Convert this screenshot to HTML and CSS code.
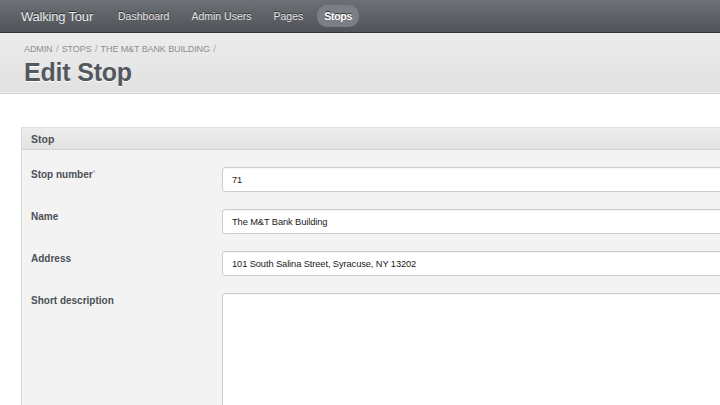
FILE: index.html
```html
<!DOCTYPE html>
<html>
<head>
<meta charset="utf-8">
<link rel="stylesheet" href="styles.css">
</head>
<body>
<nav class="topbar">
  <span class="brand">Walking Tour</span>
  <ul class="nav">
    <li><a>Dashboard</a></li>
    <li><a>Admin Users</a></li>
    <li><a>Pages</a></li>
    <li class="active"><a>Stops</a></li>
  </ul>
</nav>
<header class="title-bar">
  <div class="breadcrumb">ADMIN <span class="sep">/</span> STOPS <span class="sep">/</span> THE M&amp;T BANK BUILDING <span class="sep">/</span></div>
  <h1>Edit Stop</h1>
</header>
<main class="content">
  <section class="panel">
    <div class="panel-head">Stop</div>
    <div class="panel-body">
      <div class="row">
        <label>Stop number<abbr>*</abbr></label>
        <div class="input">71</div>
      </div>
      <div class="row">
        <label>Name</label>
        <div class="input">The M&amp;T Bank Building</div>
      </div>
      <div class="row">
        <label>Address</label>
        <div class="input">101 South Salina Street, Syracuse, NY 13202</div>
      </div>
      <div class="row">
        <label>Short description</label>
        <div class="input textarea"></div>
      </div>
    </div>
  </section>
</main>
</body>
</html>
```
FILE: styles.css
```css
html, body {
  margin: 0;
  padding: 0;
  width: 720px;
  height: 405px;
  overflow: hidden;
  background: #fff;
  font-family: "Liberation Sans", Arial, sans-serif;
}
.topbar {
  height: 32px;
  display: flex;
  align-items: center;
  padding-left: 21px;
  background: linear-gradient(#6d7176, #505358);
  border-bottom: 1px solid #333639;
  box-shadow: 0 1px 0 #c9c9c9;
}
.brand {
  color: #ececec;
  font-size: 13px;
  text-shadow: 0 -1px 0 #2d2f32;
  letter-spacing: -0.2px;
  margin-right: 14px;
}
.nav {
  list-style: none;
  margin: 0;
  padding: 0;
  display: flex;
  align-items: center;
}
.nav li a {
  display: block;
  font-size: 10.5px;
  color: #e6e6e6;
  text-shadow: 0 -1px 0 #2d2f32;
  padding: 4px 11px;
  border-radius: 10px;
}
.nav li.active a {
  background: #7b7f85;
  color: #fff;
  font-weight: bold;
  padding: 5px 7px;
  margin-left: 3px;
  letter-spacing: -0.3px;
}
.title-bar {
  height: 61px;
  padding: 11px 24px 0;
  background: linear-gradient(#ececec, #e1e1e1);
  border-bottom: 1px solid #cfcfcf;
  box-shadow: inset 0 -1px 0 #efefef;
  box-sizing: border-box;
}
.breadcrumb {
  font-size: 9px;
  color: #8b8e93;
  letter-spacing: -0.1px;
}
.breadcrumb .sep {
  color: #a4a6aa;
  margin: 0 1px;
}
h1 {
  margin: 4px 0 0;
  font-size: 25px;
  line-height: 28px;
  color: #53585e;
  font-weight: bold;
  letter-spacing: -0.2px;
  text-shadow: 0 1px 0 #fff;
}
.content {
  padding: 33px 0 0 21px;
}
.panel {
  width: 760px;
  border-left: 1px solid #dcdcdc;
  background: #f3f3f3;
}
.panel-head {
  height: 23px;
  line-height: 22px;
  padding-left: 9px;
  font-size: 10.5px;
  font-weight: bold;
  color: #4b5057;
  background: linear-gradient(#ededed, #e3e3e3);
  border-top: 1px solid #e0e0e0;
  border-bottom: 1px solid #d3d3d3;
  box-sizing: border-box;
}
.panel-body {
  padding-top: 17px;
}
.row {
  display: flex;
  align-items: flex-start;
  min-height: 42px;
}
.row label {
  width: 200px;
  flex: none;
  padding-left: 9px;
  box-sizing: border-box;
  font-size: 10px;
  font-weight: bold;
  color: #4b5057;
  padding-top: 2px;
}
.row abbr {
  font-size: 7px;
  color: #a0a0a0;
  vertical-align: top;
  font-weight: normal;
}
.input {
  flex: 1;
  height: 25px;
  box-sizing: border-box;
  background: #fff;
  border: 1px solid #cdcdcd;
  border-radius: 3px;
  font-size: 9.3px;
  letter-spacing: -0.1px;
  color: #1a1a1a;
  padding: 7px 0 0 9px;
  box-shadow: inset 0 1px 1px rgba(0,0,0,0.04);
}
.input.textarea {
  height: 140px;
}
```
